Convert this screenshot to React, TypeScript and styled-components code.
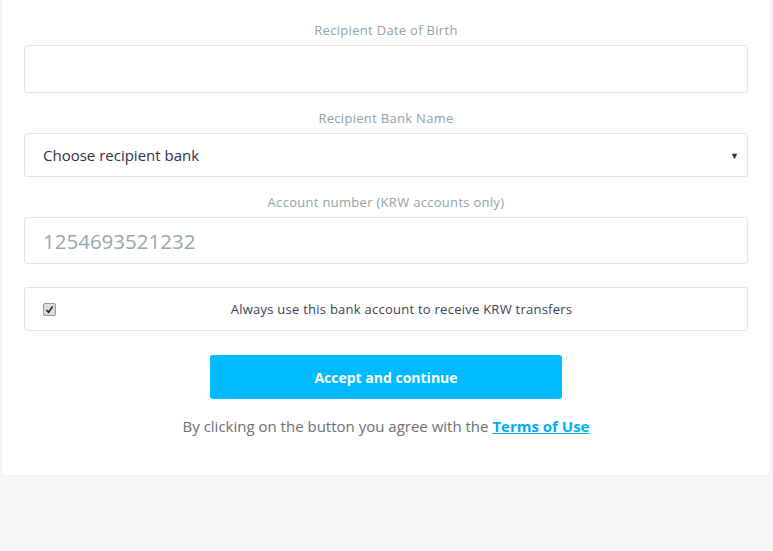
import { FC } from "react";
import styled, { createGlobalStyle } from "styled-components";

const GlobalStyle = createGlobalStyle`
  html, body {
    margin: 0;
    padding: 0;
    background: #f5f6f8;
    font-family: "Open Sans", "Liberation Sans", sans-serif;
  }
`;

const Page = styled.div`
  width: 773px;
  height: 551px;
  background: #f5f6f8;
  overflow: hidden;
`;

const Card = styled.div`
  margin: 0 2px 0 1px;
  background: #ffffff;
  border: 1px solid #eef0f2;
  border-top: none;
  border-radius: 0 0 4px 4px;
  padding: 20px 22px 39px 22px;
  display: flex;
  flex-direction: column;
`;

const Field = styled.div`
  display: flex;
  flex-direction: column;
  margin-bottom: 15px;
`;

const Label = styled.div`
  text-align: center;
  color: #93a1a8;
  font-size: 13px;
  letter-spacing: 0.3px;
  line-height: 20px;
  margin-bottom: 5px;
`;

const Box = styled.div<{ $h: number }>`
  height: ${(p) => p.$h}px;
  border: 1px solid #e2e4e6;
  border-radius: 3px;
  box-sizing: border-box;
  display: flex;
  align-items: center;
  padding: 0 8px 0 18px;
  background: #fff;
`;

const SelectText = styled.span`
  flex: 1;
  color: #2c3148;
  font-size: 15px;
`;

const Arrow = styled.span`
  color: #2c3148;
  font-size: 9px;
`;

const Placeholder = styled.span`
  color: #9aa6ae;
  font-size: 20.5px;
`;

const CheckRow = styled(Box)`
  margin-top: 8px;
  padding: 0 18px;
`;

const CheckMark = styled.span`
  width: 11px;
  height: 11px;
  border: 1px solid #9a9a9a;
  border-radius: 2px;
  background: #dcdcdc;
  display: flex;
  align-items: center;
  justify-content: center;
`;

const CheckText = styled.span`
  flex: 1;
  text-align: center;
  color: #3a3f55;
  font-size: 13px;
  letter-spacing: 0.25px;
  padding-left: 18px;
`;

const Button = styled.button`
  align-self: center;
  margin-top: 24px;
  width: 352px;
  height: 44px;
  border: none;
  border-radius: 3px;
  background: #00baff;
  color: #fff;
  font-family: "Open Sans", "Liberation Sans", sans-serif;
  font-weight: 700;
  font-size: 14px;
`;

const Terms = styled.p`
  margin: 17px 0 0;
  text-align: center;
  color: #6b6f78;
  font-size: 15px;
`;

const TermsLink = styled.a`
  color: #00aef5;
  font-weight: 700;
  text-decoration: underline;
`;

const App: FC = () => {
  return (
    <Page>
      <GlobalStyle />
      <Card>
        <Field>
          <Label>Recipient Date of Birth</Label>
          <Box $h={48} />
        </Field>
        <Field>
          <Label>Recipient Bank Name</Label>
          <Box $h={44}>
            <SelectText>Choose recipient bank</SelectText>
            <Arrow>▼</Arrow>
          </Box>
        </Field>
        <Field>
          <Label>Account number (KRW accounts only)</Label>
          <Box $h={47}>
            <Placeholder>1254693521232</Placeholder>
          </Box>
        </Field>
        <CheckRow $h={44}>
          <CheckMark>
            <svg width="9" height="9" viewBox="0 0 10 10">
              <path d="M1.5 5.5 L4 8 L8.5 1.5" fill="none" stroke="#222" strokeWidth="1.8" />
            </svg>
          </CheckMark>
          <CheckText>Always use this bank account to receive KRW transfers</CheckText>
        </CheckRow>
        <Button>Accept and continue</Button>
        <Terms>
          By clicking on the button you agree with the <TermsLink href="#">Terms of Use</TermsLink>
        </Terms>
      </Card>
    </Page>
  );
};

export default App;
